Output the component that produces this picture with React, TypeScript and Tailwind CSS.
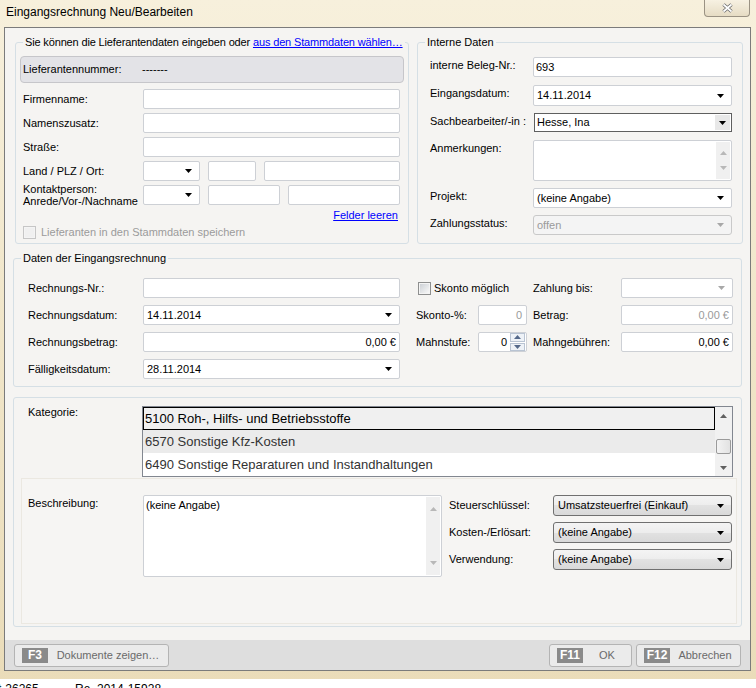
import React from 'react';

// small glyph helpers
const Down = ({ c = '#000' }: { c?: string }) => (
  <svg width="7" height="4" viewBox="0 0 7 4" className="shrink-0">
    <path d="M0 0h7L3.5 4z" fill={c} />
  </svg>
);
const Up = ({ c = '#000' }: { c?: string }) => (
  <svg width="7" height="4" viewBox="0 0 7 4" className="shrink-0">
    <path d="M0 4h7L3.5 0z" fill={c} />
  </svg>
);

function Box({ className = '', children, disabled = false }: { className?: string; children?: React.ReactNode; disabled?: boolean }) {
  return (
    <div
      className={`flex h-[20px] shrink-0 items-center rounded-[2px] border border-[#cdd0d5] ${disabled ? 'text-[#9a9a9a]' : ''} bg-white ${className}`}
    >
      {children}
    </div>
  );
}

function Combo({ className = '', value = '', disabled = false }: { className?: string; value?: string; disabled?: boolean }) {
  return (
    <Box className={className} disabled={disabled}>
      <span className="flex-1 pl-[3px]">{value}</span>
      <span className="mr-[7px]">
        <Down c={disabled ? '#a8a8a8' : '#000'} />
      </span>
    </Box>
  );
}

function Memo({ className = '', value = '', bar = 'py-[7px]' }: { className?: string; value?: string; bar?: string }) {
  return (
    <div className={`flex shrink-0 rounded-[2px] border border-[#cdd0d5] bg-white ${className}`}>
      <div className="flex-1 px-[2px] pt-[3px]">{value}</div>
      <div className={`my-[1px] mr-[1px] flex w-[14px] flex-col items-center justify-between bg-[#f0f0f0] ${bar}`}>
        <Up c="#b8b8b8" />
        <Down c="#b8b8b8" />
      </div>
    </div>
  );
}

function Check({ disabled = false }: { disabled?: boolean }) {
  return (
    <span
      className={`flex h-[13px] w-[13px] shrink-0 items-center justify-center border ${disabled ? 'border-[#c6c6c6] bg-[#f4f4f4]' : 'border-[#8e8f8f] bg-[#f4f4f4]'}`}
    >
      <span className={`h-[9px] w-[9px] ${disabled ? 'bg-[#f0f0f0]' : 'bg-[linear-gradient(135deg,#cdd1d6,#f8f8f8)]'}`} />
    </span>
  );
}

function Row1({ label, children }: { label: React.ReactNode; children: React.ReactNode }) {
  return (
    <div className="flex h-[20px] items-center">
      <div className="w-[120px] shrink-0">{label}</div>
      {children}
    </div>
  );
}

function Row2({ label, children, mt }: { label: string; children: React.ReactNode; mt: string }) {
  return (
    <div className={`flex items-start ${mt}`}>
      <div className="mt-[2px] w-[103px] shrink-0">{label}</div>
      {children}
    </div>
  );
}

function ButtonCombo({ value }: { value: string }) {
  return (
    <div className="flex h-[21px] w-[179px] items-center rounded-[3px] border border-[#707070] bg-[linear-gradient(#f4f4f4,#ededed_50%,#e2e2e2_50%,#d9d9d9)] pl-[4px]">
      <span className="flex-1">{value}</span>
      <span className="mr-[7px]">
        <Down />
      </span>
    </div>
  );
}

function FKey({ k, label, className }: { k: string; label: string; className: string }) {
  return (
    <div className={`flex h-[23px] items-center rounded-[3px] border border-[#b4b4b4] bg-[#ebebeb] pl-[7px] ${className}`}>
      <span className="flex h-[15px] w-[26px] items-center justify-center bg-[#8a8a8a] text-[12px] font-bold text-white">{k}</span>
      <span className="flex-1 text-center text-[#6a6a6a]">{label}</span>
    </div>
  );
}

function Spinner() {
  return (
    <div className="flex h-[20px] w-[49px] shrink-0 items-center rounded-[2px] border border-[#cdd0d5] bg-white">
      <span className="flex-1 pr-[3px] text-right">0</span>
      <div className="mr-[1px] flex h-[18px] w-[15px] flex-col gap-[1px]">
        <span className="flex flex-1 items-center justify-center border border-[#b9c4d3] bg-[#eef2f7]">
          <Up c="#55698a" />
        </span>
        <span className="flex flex-1 items-center justify-center border border-[#b9c4d3] bg-[#eef2f7]">
          <Down c="#55698a" />
        </span>
      </div>
    </div>
  );
}

function CloseButton() {
  return (
    <div className="mr-[6px] flex h-[17px] w-[46px] items-center justify-center rounded-b-[4px] border border-t-0 border-[#9a9283] bg-[linear-gradient(#f7f1e2,#e6dcc4)]">
      <svg width="13" height="10" viewBox="0 0 13 10">
        <path d="M2.5 1.5l8 7M10.5 1.5l-8 7" stroke="#6d6d6d" strokeWidth="3.4" />
        <path d="M2.5 1.5l8 7M10.5 1.5l-8 7" stroke="#ffffff" strokeWidth="1.7" />
      </svg>
    </div>
  );
}

export default function App() {
  return (
    <div className="flex h-[688px] w-[756px] flex-col overflow-hidden bg-[linear-gradient(#f7f0dc,#f0e5c8_50%,#eadcb9)] font-['Liberation_Sans',Arial,sans-serif] text-[11px] leading-[13px] text-black">
      {/* title bar */}
      <div className="flex h-[27px] shrink-0 items-start justify-between">
        <span className="ml-[6px] mt-[5px] text-[12px] leading-[14px]">Eingangsrechnung Neu/Bearbeiten</span>
        <CloseButton />
      </div>

      {/* client area */}
      <div className="ml-[4px] flex h-[644px] w-[747px] shrink-0 flex-col border border-[#7b7b7b] bg-[#f5f4f2]">
        <div className="ml-[10px] mt-[7px] flex items-start">
          {/* Lieferant */}
          <fieldset className="h-[209px] w-[394px] min-w-0 rounded-[3px] border border-[#d5dfe5]">
            <legend className="ml-[7px] whitespace-nowrap px-[2px] leading-[14px] tracking-[-0.15px]">
              Sie können die Lieferantendaten eingeben oder <span className="text-[#0000ff] underline">aus den Stammdaten wählen…</span>
            </legend>
            <div className="px-[4px]">
              <div className="mt-[7px] flex h-[27px] items-center rounded-[4px] border border-[#c6c6ca] bg-[#e3e3e7] pl-[2px]">
                <span className="w-[119px]">Lieferantennummer:</span>
                <span>-------</span>
              </div>
              <div className="mt-[6px] flex flex-col gap-[4px] pl-[3px]">
                <Row1 label="Firmenname:">
                  <Box className="w-[257px]" />
                </Row1>
                <Row1 label="Namenszusatz:">
                  <Box className="w-[257px]" />
                </Row1>
                <Row1 label="Straße:">
                  <Box className="w-[257px]" />
                </Row1>
                <Row1 label="Land / PLZ / Ort:">
                  <div className="flex gap-[8px]">
                    <Combo className="w-[57px]" />
                    <Box className="w-[48px]" />
                    <Box className="w-[136px]" />
                  </div>
                </Row1>
                <Row1
                  label={
                    <div className="leading-[12px]">
                      Kontaktperson:
                      <br />
                      Anrede/Vor-/Nachname
                    </div>
                  }
                >
                  <div className="flex gap-[8px]">
                    <Combo className="w-[57px]" />
                    <Box className="w-[72px]" />
                    <Box className="w-[112px]" />
                  </div>
                </Row1>
              </div>
              <div className="mt-[4px] flex justify-end pr-[6px]">
                <span className="text-[#0000ff] underline">Felder leeren</span>
              </div>
              <div className="mt-[4px] flex items-center pl-[3px]">
                <Check disabled />
                <span className="ml-[5px] text-[#9b9b9b]">Lieferanten in den Stammdaten speichern</span>
              </div>
            </div>
          </fieldset>

          {/* Interne Daten */}
          <fieldset className="ml-[8px] h-[209px] w-[326px] rounded-[3px] border border-[#d5dfe5]">
            <legend className="ml-[7px] px-[2px] leading-[14px]">Interne Daten</legend>
            <div className="flex flex-col pl-[12px]">
              <Row2 label="interne Beleg-Nr.:" mt="mt-[8px]">
                <Box className="w-[199px]">
                  <span className="pl-[2px]">693</span>
                </Box>
              </Row2>
              <Row2 label="Eingangsdatum:" mt="mt-[8px]">
                <Combo className="h-[21px] w-[199px]" value="14.11.2014" />
              </Row2>
              <Row2 label="Sachbearbeiter/-in :" mt="mt-[7px]">
                <div className="ml-[1px] flex h-[19px] w-[198px] items-center border border-[#5f5f5f] bg-white">
                  <span className="flex-1 pl-[2px]">Hesse, Ina</span>
                  <span className="mr-[1px] flex h-[15px] w-[15px] items-center justify-center bg-[#e8e8e8]">
                    <Down />
                  </span>
                </div>
              </Row2>
              <Row2 label="Anmerkungen:" mt="mt-[8px]">
                <Memo className="h-[41px] w-[199px]" bar="py-[9px]" />
              </Row2>
              <Row2 label="Projekt:" mt="mt-[7px]">
                <Combo className="w-[199px]" value="(keine Angabe)" />
              </Row2>
              <Row2 label="Zahlungsstatus:" mt="mt-[7px]">
                <div className="flex h-[20px] w-[199px] items-center rounded-[3px] border border-[#c9c9c9] bg-[#f4f4f4] text-[#9a9a9a]">
                  <span className="flex-1 pl-[3px]">offen</span>
                  <span className="mr-[7px]">
                    <Down c="#a8a8a8" />
                  </span>
                </div>
              </Row2>
            </div>
          </fieldset>
        </div>

        {/* Daten der Eingangsrechnung */}
        <fieldset className="ml-[8px] mt-[7px] h-[136px] w-[729px] rounded-[3px] border border-[#d5dfe5]">
          <legend className="ml-[7px] px-[2px] leading-[14px]">Daten der Eingangsrechnung</legend>
          <div className="mt-[13px] flex flex-col gap-[7px] pl-[14px]">
            <div className="flex h-[20px] items-center">
              <span className="w-[115px]">Rechnungs-Nr.:</span>
              <Box className="w-[257px]" />
              <div className="ml-[16px] flex w-[117px] items-center pl-[2px]">
                <Check />
                <span className="ml-[3px]">Skonto möglich</span>
              </div>
              <span className="w-[88px]">Zahlung bis:</span>
              <Combo className="w-[112px]" disabled />
            </div>
            <div className="flex h-[20px] items-center">
              <span className="w-[115px]">Rechnungsdatum:</span>
              <Combo className="w-[257px]" value="14.11.2014" />
              <div className="ml-[16px] flex w-[117px] items-center">
                <span className="w-[62px]">Skonto-%:</span>
                <Box className="w-[49px]" disabled>
                  <span className="flex-1 pr-[4px] text-right">0</span>
                </Box>
              </div>
              <span className="w-[88px]">Betrag:</span>
              <Box className="w-[112px]" disabled>
                <span className="flex-1 pr-[3px] text-right">0,00 €</span>
              </Box>
            </div>
            <div className="flex h-[20px] items-center">
              <span className="w-[115px]">Rechnungsbetrag:</span>
              <Box className="w-[257px]">
                <span className="flex-1 pr-[3px] text-right">0,00 €</span>
              </Box>
              <div className="ml-[16px] flex w-[117px] items-center">
                <span className="w-[62px]">Mahnstufe:</span>
                <Spinner />
              </div>
              <span className="w-[88px]">Mahngebühren:</span>
              <Box className="w-[112px]">
                <span className="flex-1 pr-[3px] text-right">0,00 €</span>
              </Box>
            </div>
            <div className="flex h-[20px] items-center">
              <span className="w-[115px]">Fälligkeitsdatum:</span>
              <Combo className="w-[257px]" value="28.11.2014" />
            </div>
          </div>
        </fieldset>

        {/* Kategorie */}
        <div className="ml-[8px] mt-[10px] h-[230px] w-[729px] rounded-[3px] border border-[#d5dfe5] pt-[8px]">
          <div className="flex items-start pl-[14px]">
            <span className="w-[114px]">Kategorie:</span>
            <div className="flex h-[71px] w-[591px] border border-[#828790] bg-white text-[13px] leading-[15px]">
              <div className="flex flex-1 flex-col">
                <div className="flex h-[23px] items-center border border-black bg-[#f0f0f0] pl-[1px]">5100 Roh-, Hilfs- und Betriebsstoffe</div>
                <div className="flex h-[23px] items-center bg-[#ebebeb] pl-[2px] text-[#333]">6570 Sonstige Kfz-Kosten</div>
                <div className="flex h-[23px] items-center pl-[2px] text-[#333]">6490 Sonstige Reparaturen und Instandhaltungen</div>
              </div>
              <div className="flex w-[17px] flex-col bg-[#f1f1f1]">
                <div className="flex h-[17px] items-center justify-center">
                  <Up c="#606060" />
                </div>
                <div className="flex-1 pt-[15px]">
                  <div className="mx-[1px] h-[15px] rounded-[2px] border border-[#9a9a9a] bg-[linear-gradient(90deg,#f3f3f3,#e2e2e2)]" />
                </div>
                <div className="flex h-[17px] items-center justify-center">
                  <Down c="#606060" />
                </div>
              </div>
            </div>
          </div>

          <div className="ml-[7px] mt-[1px] h-[146px] w-[716px] border border-[#ebe8e1] bg-[#f6f5f3] pt-[16px]">
            <div className="flex items-start pl-[6px]">
              <span className="w-[115px] pt-[2px]">Beschreibung:</span>
              <Memo className="h-[82px] w-[299px] border-[#b9cfe3]" value="(keine Angabe)" bar="py-[10px]" />
              <div className="ml-[7px] flex flex-col gap-[6px]">
                <div className="flex h-[21px] items-center">
                  <span className="w-[104px]">Steuerschlüssel:</span>
                  <ButtonCombo value="Umsatzsteuerfrei (Einkauf)" />
                </div>
                <div className="flex h-[21px] items-center">
                  <span className="w-[104px]">Kosten-/Erlösart:</span>
                  <ButtonCombo value="(keine Angabe)" />
                </div>
                <div className="flex h-[21px] items-center">
                  <span className="w-[104px]">Verwendung:</span>
                  <ButtonCombo value="(keine Angabe)" />
                </div>
              </div>
            </div>
          </div>
        </div>

        {/* footer */}
        <div className="mt-auto flex h-[30px] shrink-0 items-start bg-[#dedede] pt-[4px]">
          <FKey k="F3" label="Dokumente zeigen…" className="ml-[9px] w-[155px]" />
          <FKey k="F11" label="OK" className="ml-auto w-[83px]" />
          <FKey k="F12" label="Abbrechen" className="ml-[4px] mr-[9px] w-[105px]" />
        </div>
      </div>

      <div className="h-[8px] shrink-0" />
      <div className="flex h-[9px] shrink-0 bg-white text-[12px] leading-[14px]">
        <span className="-ml-[2px] mt-[3px] w-[77px]">t-26265</span>
        <span className="mt-[3px]">Re. 2014-15928</span>
      </div>
    </div>
  );
}
